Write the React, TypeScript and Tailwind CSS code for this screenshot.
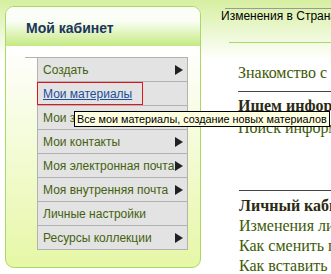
import React from "react";

const Arrow = () => (
  <svg width="8" height="10" viewBox="0 0 8 10" className="shrink-0">
    <path d="M0 0 L8 5 L0 10 Z" fill="#222" />
  </svg>
);

const items = [
  { label: "Создать", arrow: true },
  { label: "Мои материалы", link: true },
  { label: "Мои закладки", arrow: true },
  { label: "Мои контакты", arrow: true },
  { label: "Моя электронная почта", arrow: true },
  { label: "Моя внутренняя почта", arrow: true },
  { label: "Личные настройки" },
  { label: "Ресурсы коллекции", arrow: true },
];

export default function App() {
  return (
    <div className="relative w-[331px] h-[274px] overflow-hidden bg-[linear-gradient(#d6efa0,#ffffff_60px)] font-['Liberation_Sans',Arial,sans-serif]">
      <div className="flex">
        {/* left panel */}
        <div className="ml-[5px] mt-[6px] w-[196px] h-[262px] shrink-0 border border-[#a9d864] rounded-[9px] flex flex-col overflow-hidden bg-[linear-gradient(#ffffff_15%,#e6f7a6)]">
          <div className="h-[39px] shrink-0 bg-[linear-gradient(#fbfef6_35%,#c5ea82)] pl-[20px] pt-[9px]">
            <span className="text-[14px] font-bold text-[#1b355f]">Мой кабинет</span>
          </div>
          <div className="ml-[19px] mt-[11px] w-[163px] border-t border-[#b2b2b2] flex">
            <div className="w-[12px] shrink-0" />
            <div className="flex-1 border-l border-[#b2b2b2]">
              {items.map((it) => (
                <div
                  key={it.label}
                  className="h-[24px] bg-[#e3e3e3] border-b border-r border-[#b2b2b2] flex items-center justify-between pr-[4px] text-[12px] text-[#44620e]"
                >
                  {it.link ? (
                    <a className="-ml-px h-[23px] w-[106px] border border-[#e0141c] pl-[5px] flex items-center text-[#1b4f9c] underline">
                      {it.label}
                    </a>
                  ) : (
                    <span className="pl-[5px] whitespace-nowrap">{it.label}</span>
                  )}
                  {it.arrow && <Arrow />}
                </div>
              ))}
            </div>
          </div>
        </div>

        {/* right content */}
        <div className="flex-1 flex flex-col whitespace-nowrap">
          <div className="mt-[8px] ml-[24px] border-t border-[#9a9a9a]" />
          <div className="ml-[20px] text-[12px] leading-[14px] text-black">Изменения в Странах</div>
          <div className="ml-[28px] mt-[19px] border-t border-[#a9d864]" />
          <div className="ml-[37px] mt-[20px] font-['Liberation_Serif',serif] text-[16px] leading-[20px] text-[#3d5a06]">
            Знакомство с системой
          </div>
          <div className="ml-[37px] mt-[8px] border-t border-[#444]" />
          <div className="ml-[37px] mt-[4px] font-['Liberation_Serif',serif] text-[16px] leading-[20px]">
            <div className="font-bold text-[#2b2b14]">Ищем информацию</div>
            <div className="text-[#3d5a06] mt-[2px]">Поиск информации</div>
          </div>
          <div className="ml-[38px] mt-[52px] border-t border-[#444]" />
          <div className="ml-[38px] mt-[5px] font-['Liberation_Serif',serif] text-[16px] leading-[20px]">
            <div className="font-bold text-[#2b2b14]">Личный кабинет</div>
            <div className="text-[#3d5a06]">Изменения личных данных</div>
            <div className="text-[#3d5a06]">Как сменить пароль</div>
            <div className="text-[#3d5a06]">Как вставить картинку</div>
          </div>
        </div>
      </div>

      {/* tooltip */}
      <div className="absolute left-[74px] top-[111px] w-[256px] h-[16px] bg-[#ffffe1] border border-black pl-[2px] text-[10.8px] leading-[14px] text-black whitespace-nowrap overflow-hidden">
        Все мои материалы, создание новых материалов
      </div>
    </div>
  );
}
